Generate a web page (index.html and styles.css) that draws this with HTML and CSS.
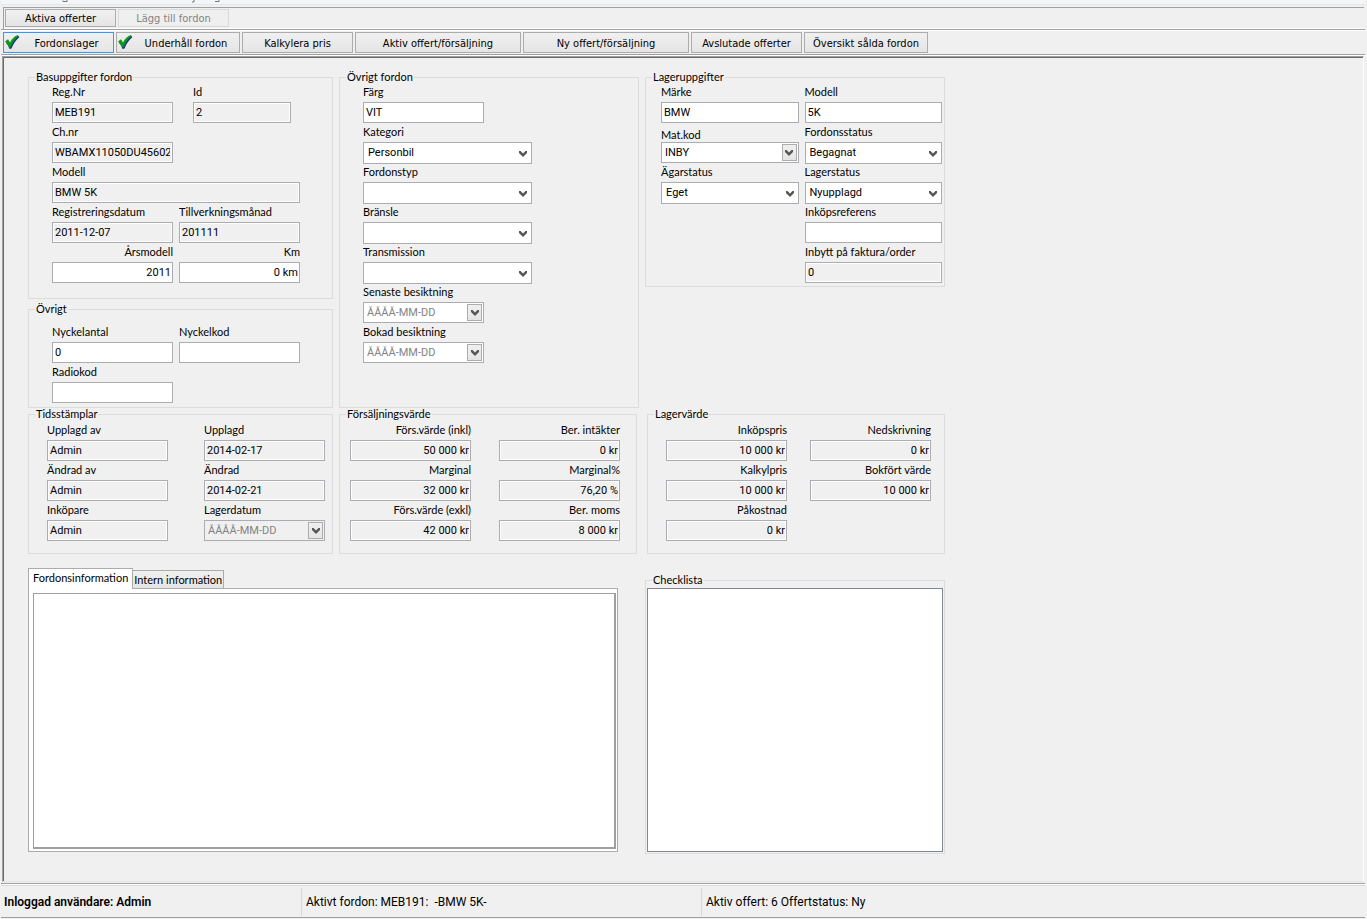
FILE: index.html
```html
<!DOCTYPE html>
<html lang="sv">
<head>
  <meta charset="UTF-8" />
  <meta name="viewport" content="width=device-width, initial-scale=1.0"/>
  <title>Fordonslager</title>
  <link rel="stylesheet" href="styles.css">
</head>
<body>

  <!-- Shared icons -->
  <svg class="sprite" aria-hidden="true">
    <symbol id="check" viewBox="0 0 16 16">
      <path d="M2 9 4 7 6.300 10 C8.500 6 11 3.500 14.600 2 L15.300 3.200 C12 6 9.500 9.500 7.500 14.500 L5.500 15 C4.500 12 3.500 10 2 9Z" fill="#1c2a9c"/>
      <path d="M1 7.500 4 5.200 6 8.500 C8 4.500 10.500 2 14 1 L14.500 2.200 C11 5 8.500 8.500 6.700 13.300 L5 13.600 C4 11 2.800 9 1 7.500Z" fill="#0a9a14"/>
    </symbol>
    <symbol id="arrow" viewBox="0 0 8 6">
      <path d="M0 0H1.500L4 2.500 6.500 0H8V2L4 6 0 2Z" fill="#555"/>
    </symbol>
  </svg>

  <div class="menubar">
    <svg width="240" height="4" aria-hidden="true">
      <path d="M62 0.500V1.500H66V0M191 2H193V0M214 1.500H218V0" fill="none" stroke="#777" stroke-width="1"/>
    </svg>
  </div>

  <nav class="toolbar toolbar-top">
    <button type="button" class="btn">Aktiva offerter</button>
    <button type="button" class="btn" disabled>Lägg till fordon</button>
  </nav>

  <nav class="toolbar toolbar-main">
    <button type="button" class="btn active"><svg class="check"><use href="#check"/></svg><span>Fordonslager</span></button>
    <button type="button" class="btn medium"><svg class="check"><use href="#check"/></svg><span>Underhåll fordon</span></button>
    <button type="button" class="btn">Kalkylera pris</button>
    <button type="button" class="btn wide">Aktiv offert/försäljning</button>
    <button type="button" class="btn wide">Ny offert/försäljning</button>
    <button type="button" class="btn">Avslutade offerter</button>
    <button type="button" class="btn medium">Översikt sålda fordon</button>
  </nav>

  <main class="workspace">
    <form class="form">

      <div class="stack">
        <fieldset class="group base">
          <legend>Basuppgifter fordon</legend>
          <div class="row spread">
            <div class="field"><label for="regnr">Reg.Nr</label><input id="regnr" value="MEB191" readonly></div>
            <div class="field short"><label for="id">Id</label><input id="id" value="2" readonly></div>
          </div>
          <div class="row">
            <div class="field"><label for="chnr">Ch.nr</label><input id="chnr" value="WBAMX11050DU45602" readonly></div>
          </div>
          <div class="row">
            <div class="field full"><label for="modell">Modell</label><input id="modell" value="BMW 5K" readonly></div>
          </div>
          <div class="row">
            <div class="field"><label for="regdatum">Registreringsdatum</label><input id="regdatum" value="2011-12-07" readonly></div>
            <div class="field"><label for="tillv">Tillverkningsmånad</label><input id="tillv" value="201111" readonly></div>
          </div>
          <div class="row">
            <div class="field num"><label for="arsmodell">Årsmodell</label><input id="arsmodell" value="2011"></div>
            <div class="field num"><label for="km">Km</label><input id="km" value="0 km"></div>
          </div>
        </fieldset>

        <fieldset class="group keys">
          <legend>Övrigt</legend>
          <div class="row">
            <div class="field"><label for="nyckelantal">Nyckelantal</label><input id="nyckelantal" value="0"></div>
            <div class="field"><label for="nyckelkod">Nyckelkod</label><input id="nyckelkod"></div>
          </div>
          <div class="row">
            <div class="field"><label for="radiokod">Radiokod</label><input id="radiokod"></div>
          </div>
        </fieldset>
      </div>

      <fieldset class="group other">
        <legend>Övrigt fordon</legend>
        <div class="field"><label for="farg">Färg</label><input id="farg" value="VIT"></div>
        <div class="field long"><label for="kategori">Kategori</label><select id="kategori"><option>Personbil</option></select></div>
        <div class="field long"><label for="fordonstyp">Fordonstyp</label><select id="fordonstyp"><option></option></select></div>
        <div class="field long"><label for="bransle">Bränsle</label><select id="bransle"><option></option></select></div>
        <div class="field long"><label for="transmission">Transmission</label><select id="transmission"><option></option></select></div>
        <div class="field">
          <label for="senaste">Senaste besiktning</label>
          <div class="combo"><input id="senaste" placeholder="ÅÅÅÅ-MM-DD"><button type="button" aria-label="Välj datum"><svg class="arrow"><use href="#arrow"/></svg></button></div>
        </div>
        <div class="field">
          <label for="bokad">Bokad besiktning</label>
          <div class="combo"><input id="bokad" placeholder="ÅÅÅÅ-MM-DD"><button type="button" aria-label="Välj datum"><svg class="arrow"><use href="#arrow"/></svg></button></div>
        </div>
      </fieldset>

      <fieldset class="group stock">
        <legend>Lageruppgifter</legend>
        <div class="row">
          <div class="field"><label for="marke">Märke</label><input id="marke" value="BMW"></div>
          <div class="field"><label for="lagermodell">Modell</label><input id="lagermodell" value="5K"></div>
        </div>
        <div class="row">
          <div class="field">
            <label class="low" for="matkod">Mat.kod</label>
            <div class="combo"><input id="matkod" value="INBY"><button type="button" aria-label="Välj mat.kod"><svg class="arrow"><use href="#arrow"/></svg></button></div>
          </div>
          <div class="field"><label for="fordonsstatus">Fordonsstatus</label><select id="fordonsstatus"><option>Begagnat</option></select></div>
        </div>
        <div class="row">
          <div class="field"><label for="agarstatus">Ägarstatus</label><select id="agarstatus"><option>Eget</option></select></div>
          <div class="field"><label for="lagerstatus">Lagerstatus</label><select id="lagerstatus"><option>Nyupplagd</option></select></div>
        </div>
        <div class="row end">
          <div class="field"><label for="inkopsref">Inköpsreferens</label><input id="inkopsref"></div>
        </div>
        <div class="row end">
          <div class="field"><label for="inbytt">Inbytt på faktura/order</label><input id="inbytt" value="0" readonly></div>
        </div>
      </fieldset>

      <fieldset class="group stamps">
        <legend>Tidsstämplar</legend>
        <div class="row">
          <div class="field"><label for="upplagdav">Upplagd av</label><input id="upplagdav" value="Admin" readonly></div>
          <div class="field"><label for="upplagd">Upplagd</label><input id="upplagd" value="2014-02-17" readonly></div>
        </div>
        <div class="row">
          <div class="field"><label for="andradav">Ändrad av</label><input id="andradav" value="Admin" readonly></div>
          <div class="field"><label for="andrad">Ändrad</label><input id="andrad" value="2014-02-21" readonly></div>
        </div>
        <div class="row">
          <div class="field"><label for="inkopare">Inköpare</label><input id="inkopare" value="Admin" readonly></div>
          <div class="field">
            <label for="lagerdatum">Lagerdatum</label>
            <div class="combo locked"><input id="lagerdatum" placeholder="ÅÅÅÅ-MM-DD" readonly><button type="button" aria-label="Välj datum"><svg class="arrow"><use href="#arrow"/></svg></button></div>
          </div>
        </div>
      </fieldset>

      <fieldset class="group sales">
        <legend>Försäljningsvärde</legend>
        <div class="row">
          <div class="field num"><label for="forsinkl">Förs.värde (inkl)</label><input id="forsinkl" value="50 000 kr" readonly></div>
          <div class="field num"><label for="intakter">Ber. intäkter</label><input id="intakter" value="0 kr" readonly></div>
        </div>
        <div class="row">
          <div class="field num"><label for="marginal">Marginal</label><input id="marginal" value="32 000 kr" readonly></div>
          <div class="field num"><label for="marginalp">Marginal%</label><input id="marginalp" value="76,20 %" readonly></div>
        </div>
        <div class="row">
          <div class="field num"><label for="forsexkl">Förs.värde (exkl)</label><input id="forsexkl" value="42 000 kr" readonly></div>
          <div class="field num"><label for="moms">Ber. moms</label><input id="moms" value="8 000 kr" readonly></div>
        </div>
      </fieldset>

      <fieldset class="group value">
        <legend>Lagervärde</legend>
        <div class="row">
          <div class="field num"><label for="inkopspris">Inköpspris</label><input id="inkopspris" value="10 000 kr" readonly></div>
          <div class="field num"><label for="nedskrivning">Nedskrivning</label><input id="nedskrivning" value="0 kr" readonly></div>
        </div>
        <div class="row">
          <div class="field num"><label for="kalkylpris">Kalkylpris</label><input id="kalkylpris" value="10 000 kr" readonly></div>
          <div class="field num"><label for="bokfort">Bokfört värde</label><input id="bokfort" value="10 000 kr" readonly></div>
        </div>
        <div class="row">
          <div class="field num"><label for="pakostnad">Påkostnad</label><input id="pakostnad" value="0 kr" readonly></div>
        </div>
      </fieldset>

      <section class="notes">
        <div class="tabs" role="tablist">
          <button type="button" class="tab selected" role="tab" aria-selected="true">Fordonsinformation</button>
          <button type="button" class="tab" role="tab" aria-selected="false">Intern information</button>
        </div>
        <div class="tab-page" role="tabpanel">
          <textarea aria-label="Fordonsinformation"></textarea>
        </div>
      </section>

      <fieldset class="group checklist">
        <legend>Checklista</legend>
        <div class="list"></div>
      </fieldset>

    </form>
  </main>

  <footer class="statusbar">
    <div class="status user">Inloggad användare: Admin</div>
    <div class="status vehicle">Aktivt fordon: MEB191:&nbsp; -BMW 5K-</div>
    <div class="status offer">Aktiv offert: 6 Offertstatus: Ny</div>
  </footer>

</body>
</html>
```
FILE: styles.css
```css
* {
  box-sizing: border-box;
}

body {
  margin: 0;
  min-height: 100vh;
  display: flex;
  flex-direction: column;
  padding: 0 2px 1px 1px;
  background: #f0f0f0;
  color: #000;
  font: 11px/16px Lato, "Liberation Sans", sans-serif;
}

button,
input,
select,
textarea {
  font: inherit;
  color: inherit;
  margin: 0;
  border-radius: 0;
}

.sprite {
  position: absolute;
  width: 0;
  height: 0;
}

.menubar {
  height: 5px;
  background: #f4f5f8;
  border-bottom: 1px solid #e6e6e8;
}

.menubar svg {
  display: block;
}

/* Toolbars */
.toolbar {
  display: flex;
  gap: 2px;
  font-family: "DejaVu Sans Condensed", "Noto Sans", sans-serif;
}

.toolbar-top {
  margin: 2px 1px 0 2px;
  padding: 1px 1px 2px;
  border: 1px solid #a0a0a0;
  border-width: 1px 0 0 1px;
  box-shadow: inset 0 -1px #fff;
}

.toolbar-main {
  padding: 2px 2px 1px;
  border-top: 1px solid #a0a0a0;
  border-bottom: 1px solid #a0a0a0;
  box-shadow: inset 0 1px #fff, 0 1px #fff;
}

.btn {
  width: 111px;
  height: 21px;
  padding: 2px 0 0;
  display: flex;
  align-items: center;
  justify-content: center;
  border: 1px solid #acacac;
  background: linear-gradient(#f0f0f0, #e5e5e5);
  white-space: nowrap;
}

.toolbar-top .btn {
  height: 18px;
}

.btn.medium {
  width: 124px;
}

.btn.wide {
  width: 166px;
}

.btn.active {
  border-color: #3399ff;
}

.btn:disabled {
  border-color: #d9d9d9;
  background: #efefef;
  color: #838383;
}

.btn span {
  flex: 1;
}

.check {
  width: 16px;
  height: 16px;
  margin-bottom: 4px;
}

.arrow {
  width: 8px;
  height: 6px;
}

/* Form area */
.workspace {
  flex: 1;
  margin: 1px 1px 0 1px;
  padding: 14px 24px 20px 25px;
  border: 1px solid #a0a0a0;
  border-right-color: #fff;
  border-bottom-color: #e3e3e3;
  box-shadow: inset 1px 1px #696969;
}

.form {
  display: grid;
  grid-template-columns: minmax(0, 305px) minmax(0, 300px) minmax(0, 300px);
  column-gap: 6px;
}

.stack {
  display: flex;
  flex-direction: column;
  gap: 4px;
}

.group {
  --inset: 1px;
  min-width: 0;
  margin: 0;
  padding: 1px 0 0 var(--inset);
  border: 1px solid #dcdcdc;
}

.group legend {
  margin-left: calc(6px - var(--inset));
  padding: 0 1px;
  line-height: 12px;
}

.row {
  display: flex;
  gap: 6px;
}

.field {
  width: 121px;
  height: 40px;
}

.field label {
  display: block;
  margin-bottom: 2px;
}

.field label.low {
  padding-top: 4px;
  margin-bottom: 0;
  line-height: 14px;
}

.field input,
.field select,
.combo {
  display: block;
  width: 100%;
  height: 21px;
  padding: 0 2px;
  border: 1px solid #abadb3;
  background: #fff;
  font-family: Roboto, "Liberation Sans", sans-serif;
}

.field input[readonly] {
  background: #f0f0f0;
  box-shadow: inset 0 0 0 1px #fff;
}

.field select {
  height: 22px;
  padding: 0 4px;
  appearance: none;
  background: #fff url("data:image/svg+xml,%3Csvg xmlns='http://www.w3.org/2000/svg' width='8' height='6'%3E%3Cpath d='M0 0H1.500L4 2.500 6.500 0H8V2L4 6 0 2Z' fill='%23555'/%3E%3C/svg%3E") no-repeat right 4px top 8px;
}

.num label,
.num input {
  text-align: right;
}

.field.num input {
  padding-right: 1px;
}

.field .combo {
  display: flex;
  padding: 1px;
}

.combo input {
  flex: 1;
  min-width: 0;
  height: 17px;
  border: 0;
}

.field .combo.locked {
  background: #f0f0f0;
}

.field .combo.locked input {
  box-shadow: none;
}

.combo input::placeholder {
  color: #838383;
}

.combo button {
  display: flex;
  align-items: center;
  justify-content: center;
  width: 15px;
  padding: 0;
  border: 1px solid #acacac;
  background: linear-gradient(#f0f0f0, #e5e5e5);
}

.short {
  width: 98px;
}

.long {
  width: 169px;
}

.full {
  width: 248px;
}

/* Group boxes */
.base {
  --inset: 23px;
  padding-bottom: 14px;
}

.base .spread {
  gap: 20px;
}

.keys {
  --inset: 23px;
  padding-top: 9px;
  padding-bottom: 3px;
}

.other {
  --inset: 23px;
}

.stock {
  --inset: 15px;
  align-self: start;
  padding-right: 2px;
  padding-bottom: 2px;
}

.stock .field {
  flex: 1;
}

.stock .end {
  padding-left: 144px;
}

.stamps,
.sales,
.value {
  padding-top: 2px;
  padding-bottom: 11px;
}

.stamps {
  --inset: 18px;
}

.stamps .row {
  gap: 36px;
}

.sales {
  --inset: 10px;
  margin-right: 2px;
}

.sales .row {
  gap: 28px;
}

.value {
  --inset: 18px;
  margin-left: 2px;
}

.value .row {
  gap: 23px;
}

/* Notes and checklist */
.notes {
  grid-column: span 2;
  display: flex;
  flex-direction: column;
  margin: 14px 21px 2px 0;
}

.tabs {
  display: flex;
  align-items: flex-end;
}

.tab {
  height: 18px;
  padding: 0 1px;
  border: 1px solid #acacac;
  border-width: 1px 1px 0 0;
  background: linear-gradient(#f0f0f0, #e5e5e5);
}

.tab.selected {
  height: 21px;
  margin-bottom: -1px;
  padding: 0 4px 2px;
  border-left-width: 1px;
  background: #fff;
  position: relative;
}

.tab-page {
  flex: 1;
  display: flex;
  padding: 4px 1px 2px 4px;
  border: 1px solid #acacac;
  background: #fff;
}

.tab-page textarea {
  flex: 1;
  min-height: 256px;
  border: 1px solid #a0a0a0;
  border-width: 1px 2px 2px 1px;
  resize: none;
}

.checklist {
  display: flex;
  margin-top: 20px;
  padding: 2px 1px 1px;
}

.list {
  flex: 1;
  min-height: 264px;
  border: 1px solid #828790;
  background: #fff;
}

/* Status bar */
.statusbar {
  display: flex;
  margin-top: 1px;
  padding: 4px 0 1px;
  border-top: 1px solid #a0a0a0;
  border-bottom: 1px solid #a0a0a0;
  box-shadow: inset 0 1px #fff, inset 0 2px #d9d9d9;
  font: 12px/28px Roboto, "Noto Sans", sans-serif;
}

.status {
  padding-left: 4px;
  border-left: 1px solid #d7d7d7;
}

.user {
  width: 300px;
  padding-left: 3px;
  border-left: 0;
  font-weight: 600;
}

.vehicle {
  width: 400px;
}

.offer {
  flex: 1;
}
```
